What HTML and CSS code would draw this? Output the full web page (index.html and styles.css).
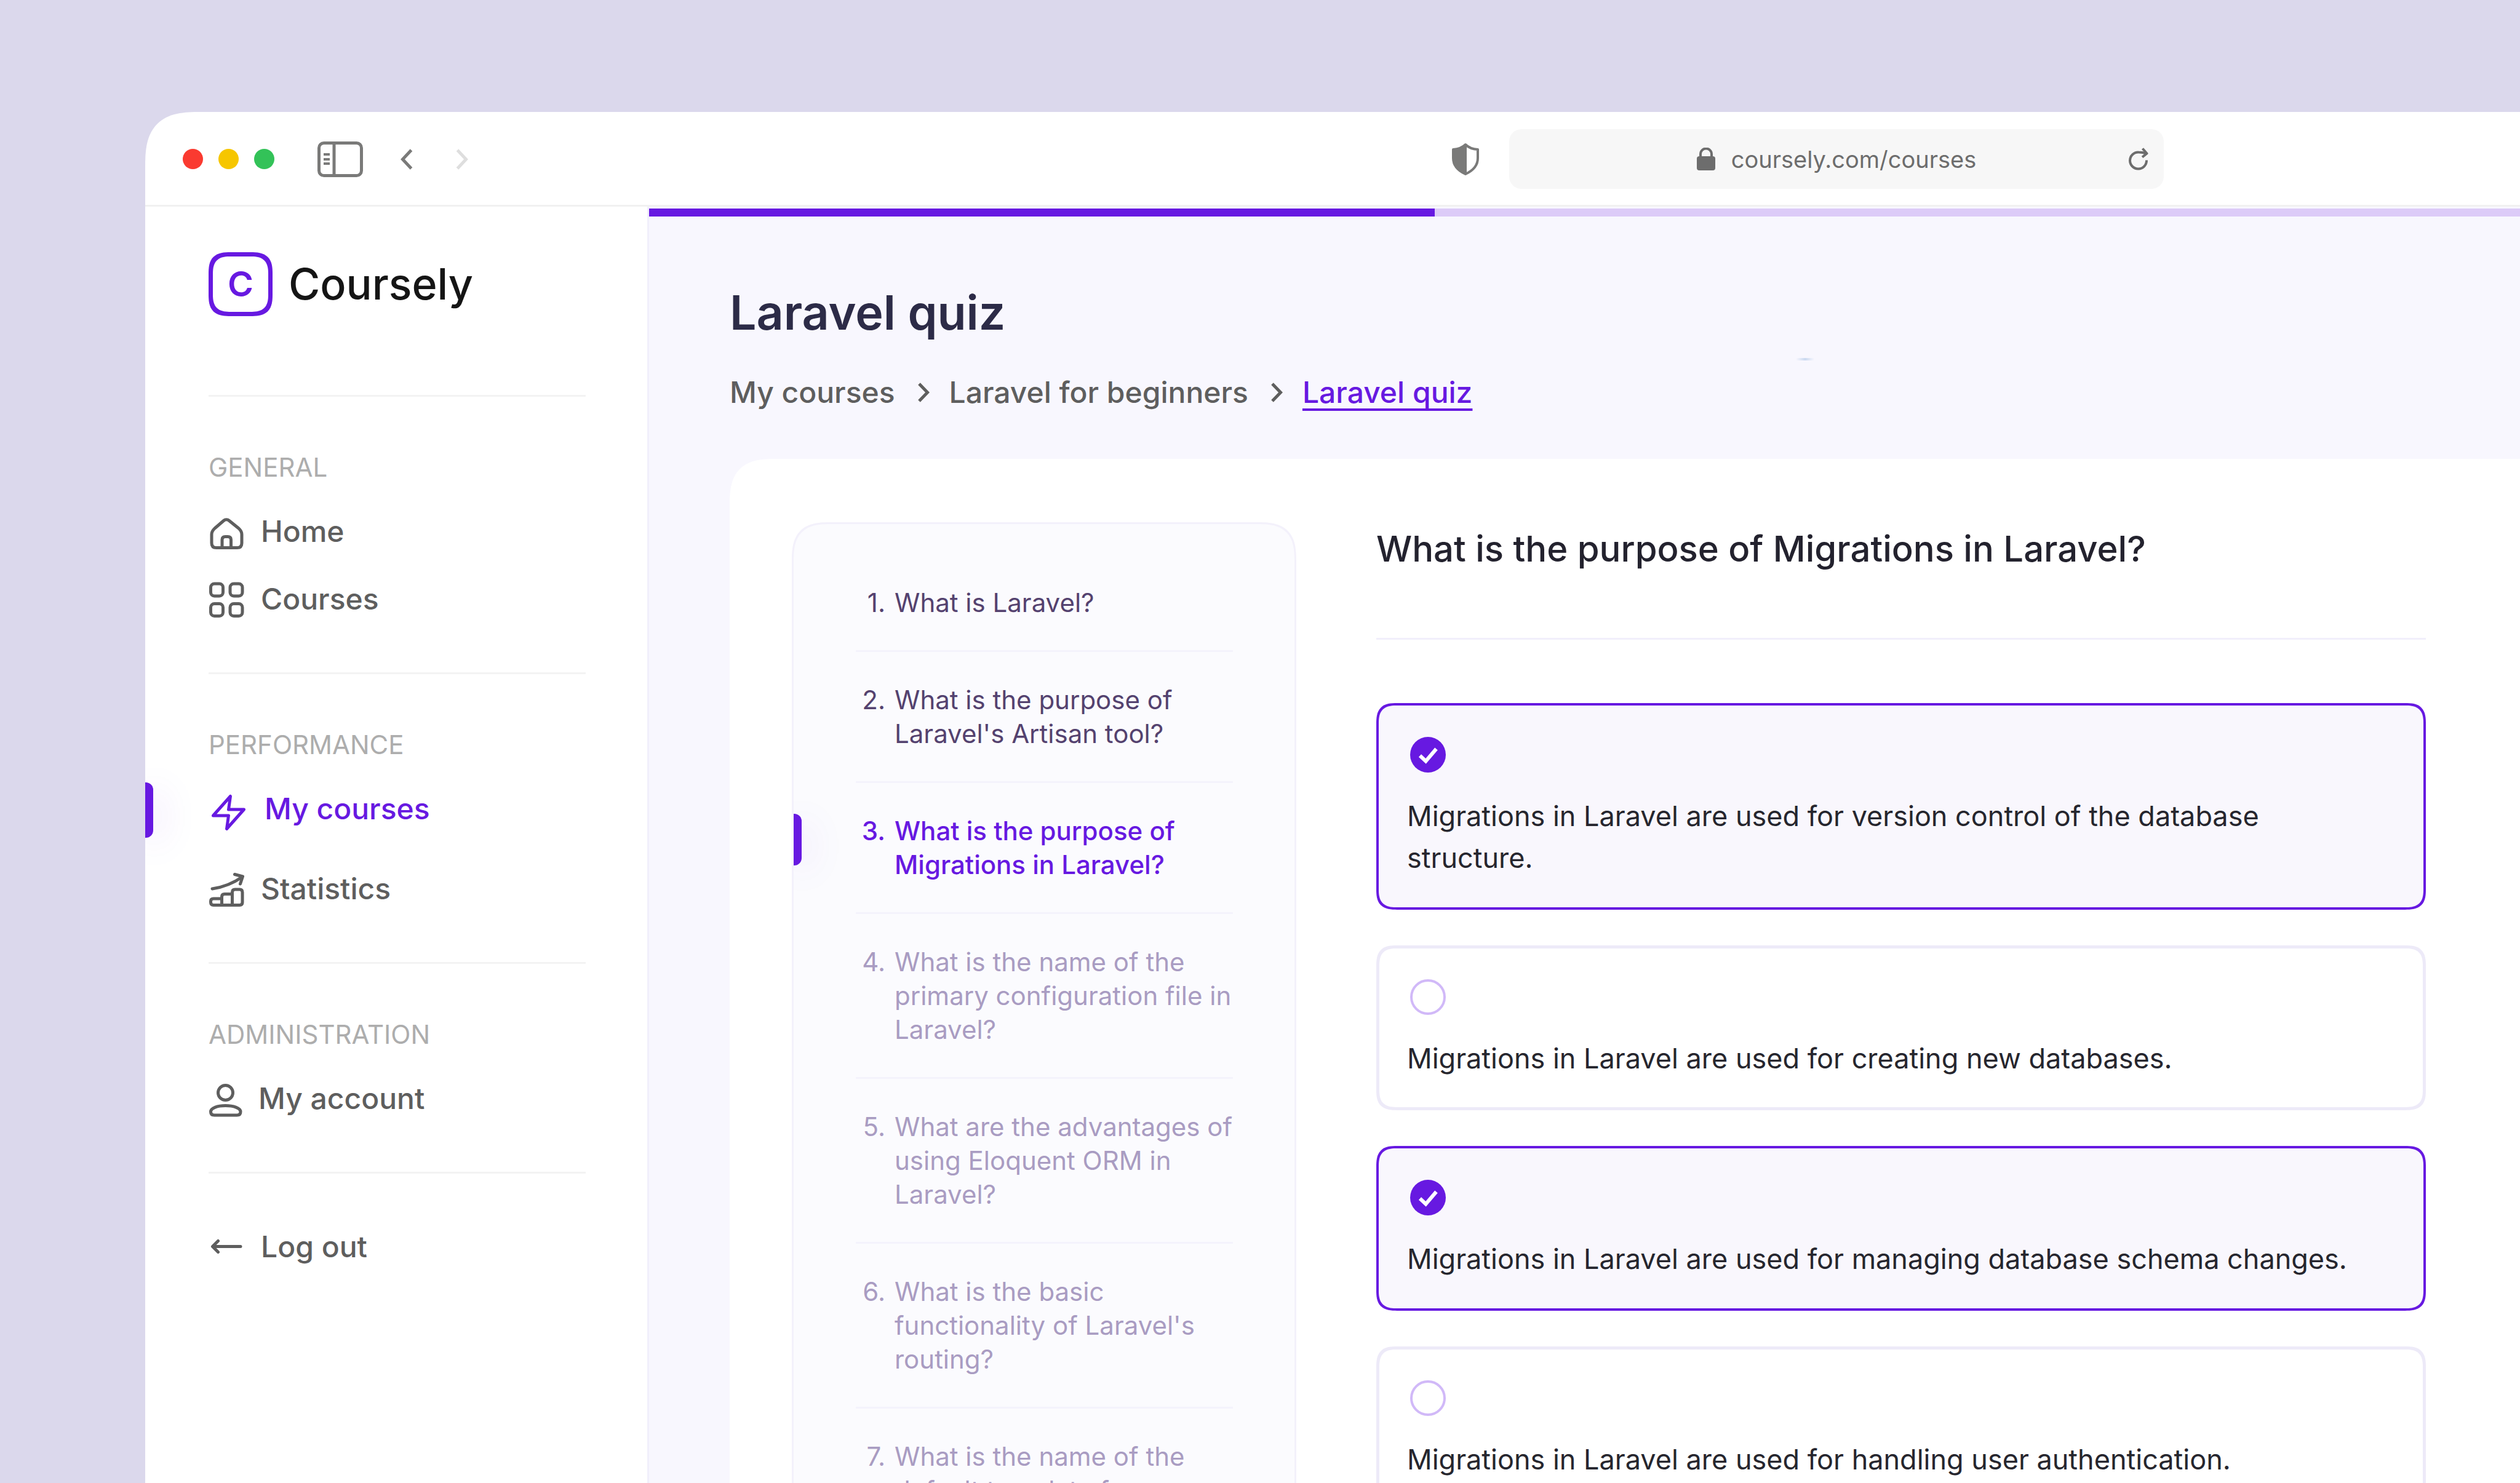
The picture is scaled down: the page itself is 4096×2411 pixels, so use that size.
FILE: index.html
```html
<!DOCTYPE html>
<html lang="en">
<head>
<meta charset="utf-8">
<meta name="viewport" content="width=device-width, initial-scale=1">
<title>Laravel quiz – Coursely</title>
<link rel="stylesheet" href="styles.css">
</head>
<body>
<div class="window">
  <header class="toolbar">
    <div class="lights">
      <span class="light light-red"></span>
      <span class="light light-yellow"></span>
      <span class="light light-green"></span>
    </div>
    <button class="tool tool-panel" type="button" aria-label="Toggle sidebar">
      <svg width="74" height="58" viewBox="0 0 74 58" fill="none" stroke="currentColor" stroke-width="5">
        <rect x="2.5" y="2.5" width="69" height="53" rx="8"/>
        <path d="M27 3v52"/>
        <path d="M10 21h10M10 29h10M10 36h10" stroke-width="4"/>
      </svg>
    </button>
    <button class="tool tool-back" type="button" aria-label="Back">
      <svg width="20" height="34" viewBox="0 0 20 34" fill="none" stroke="currentColor" stroke-width="5"><path d="M17.500 2 3.500 17l14 15"/></svg>
    </button>
    <button class="tool tool-forward" type="button" aria-label="Forward" disabled>
      <svg width="20" height="34" viewBox="0 0 20 34" fill="none" stroke="currentColor" stroke-width="5"><path d="M2.500 2l14 15-14 15"/></svg>
    </button>
    <button class="tool tool-shield" type="button" aria-label="Privacy report">
      <svg width="44" height="53" viewBox="0 0 44 53" fill="none" stroke="currentColor" stroke-width="4" stroke-linejoin="round">
        <path d="M22 3C17 8 10 10.500 2 11v14c0 12 8 20.500 20 26 12-5.500 20-14 20-26V11C34 10.500 27 8 22 3z"/>
        <path d="M24 3h-2C17 8 10 10.500 2 11v14c0 12 8 20.500 20 26h2z" fill="currentColor" stroke="none"/>
      </svg>
    </button>
    <div class="address">
      <svg width="30" height="37" viewBox="0 0 30 37" fill="none">
        <rect y="14" width="30" height="23" rx="4" fill="currentColor"/>
        <path d="M6 16v-5.500a9 9 0 0 1 18 0V16" stroke="currentColor" stroke-width="4"/>
      </svg>
      <span>coursely.com/courses</span>
      <button class="tool reload" type="button" aria-label="Reload">
        <svg width="33" height="37" viewBox="0 0 33 37" fill="none" stroke="currentColor" stroke-width="4">
          <path d="M29 20.500A13.500 13.500 0 1 1 16 7.500c4 0 8 .5 12 2"/>
          <path d="M22.500 1.500 29.500 9.500 22 15.500" stroke-linejoin="round"/>
        </svg>
      </button>
    </div>
  </header>

  <div class="app">
    <aside class="sidebar">
      <a class="brand" href="#">
        <span class="brand-mark">C</span>
        <span>Coursely</span>
      </a>
      <nav>
        <section class="group">
          <h2>General</h2>
          <ul>
            <li><a href="#">
              <svg width="58" height="62" viewBox="0 0 58 62"><path d="M10 26 24.500 13.500a7 7 0 0 1 9 0L49 26q5 4.500 5 10v14q0 7.500-7.500 7.500h-34Q5 57.500 5 50V36q0-5.500 5-10z"/><path d="M22 57.500V44.500q0-5 5-5h4.500q5 0 5 5v13"/></svg>
              Home</a></li>
            <li><a href="#">
              <svg width="58" height="62" viewBox="0 0 58 62"><rect x="3.500" y="6" width="20" height="20" rx="6"/><rect x="35" y="6" width="20" height="20" rx="6"/><rect x="3.500" y="38.500" width="20" height="20" rx="6"/><rect x="35" y="38.500" width="20" height="20" rx="6"/></svg>
              Courses</a></li>
          </ul>
        </section>
        <section class="group group-loose">
          <h2>Performance</h2>
          <ul>
            <li><a class="current" href="#" aria-current="page">
              <svg width="64" height="62" viewBox="0 0 64 62"><path d="M35.500 10.500 32.500 32h25L29.500 63.500l3-21.500h-25z"/></svg>
              My courses</a></li>
            <li><a href="#">
              <svg width="58" height="62" viewBox="0 0 58 62"><path d="M21.500 57.500H8q-4.500 0-4.500-4.500v-2q0-4 4.500-4h13.500M21.500 57.500V44q0-4.500 4.500-4.500h12.500M38.500 57.500v-21q0-4.500 4.500-4.500h7.500q4.500 0 4.500 4.500V53q0 4.500-4.500 4.500h-29"/><path d="M6 31Q33 27 55 11.500M42.500 7.500l13 3.500-4 12"/></svg>
              Statistics</a></li>
          </ul>
        </section>
        <section class="group">
          <h2>Administration</h2>
          <ul>
            <li><a href="#">
              <svg width="54" height="62" viewBox="0 0 54 62"><circle cx="27.500" cy="21.500" r="12"/><path d="M3.500 52.500C3.500 46 15 42.500 27.500 42.500S52 46 52 52.500Q52 58 46 58H9.500q-6 0-6-5.500z"/></svg>
              My account</a></li>
          </ul>
        </section>
        <section class="group">
          <ul>
            <li><a href="#">
              <svg width="58" height="62" viewBox="0 0 58 62"><path d="M7 30.500h45M15.500 21.500l-9 9 9 9"/></svg>
              Log out</a></li>
          </ul>
        </section>
      </nav>
    </aside>

    <main class="main">
      <div class="progress" role="progressbar" aria-label="Quiz progress" aria-valuenow="42" aria-valuemin="0" aria-valuemax="100"><div class="progress-fill" style="width: 42%"></div></div>
      <div class="content">
        <span class="smudge"></span>
        <h1>Laravel quiz</h1>
        <nav class="crumbs" aria-label="Breadcrumb">
          <a href="#">My courses</a>
          <svg width="30" height="36" viewBox="0 0 30 36"><path d="M10 4l13.500 14L10 32"/></svg>
          <a href="#">Laravel for beginners</a>
          <svg width="30" height="36" viewBox="0 0 30 36"><path d="M10 4l13.500 14L10 32"/></svg>
          <a class="here" href="#" aria-current="page">Laravel quiz</a>
        </nav>
        <div class="card">
          <ol class="questions">
            <li class="done"><span class="num">1.</span><span>What is Laravel?</span></li>
            <li class="done"><span class="num">2.</span><span>What is the purpose of Laravel's Artisan tool?</span></li>
            <li class="active"><span class="num">3.</span><span>What is the purpose of Migrations in Laravel?</span></li>
            <li><span class="num">4.</span><span>What is the name of the primary configuration file in Laravel?</span></li>
            <li><span class="num">5.</span><span>What are the advantages of using Eloquent ORM in Laravel?</span></li>
            <li><span class="num">6.</span><span>What is the basic functionality of Laravel's routing?</span></li>
            <li><span class="num">7.</span><span>What is the name of the default template for Laravel?</span></li>
          </ol>
          <form class="question">
            <h2>What is the purpose of Migrations in Laravel?</h2>
            <div class="options">
              <label class="option"><input type="checkbox" checked><span>Migrations in Laravel are used for version control of the database structure.</span></label>
              <label class="option"><input type="checkbox"><span>Migrations in Laravel are used for creating new databases.</span></label>
              <label class="option"><input type="checkbox" checked><span>Migrations in Laravel are used for managing database schema changes.</span></label>
              <label class="option"><input type="checkbox"><span>Migrations in Laravel are used for handling user authentication.</span></label>
            </div>
          </form>
        </div>
      </div>
    </main>
  </div>
</div>
</body>
</html>
```
FILE: styles.css
```css
:root {
  --purple: #6719e1;
  --grey: #5e5e5e;
  --line: #f3f3f3;
  --lilac-line: #f3f1fb;
}

* { box-sizing: border-box; margin: 0; padding: 0; }

body {
  display: flex;
  height: 100vh;
  padding: 182px 0 0 236px;
  overflow: hidden;
  background: #dbd8ec;
  font-family: Inter, "Liberation Sans", sans-serif;
}

a { color: inherit; text-decoration: none; }
ul, ol { list-style: none; }
button { border: 0; background: none; font: inherit; color: inherit; }
svg { display: block; flex: none; }

.window {
  flex: 1;
  display: flex;
  flex-direction: column;
  overflow: hidden;
  background: #fff;
  border-top-left-radius: 90px;
  corner-shape: superellipse(1.5);
}

/* Browser toolbar */
.toolbar {
  flex: none;
  display: flex;
  align-items: center;
  height: 154px;
  padding: 2px 579px 0 61px;
  border-bottom: 3px solid #f1f1f1;
  color: #7a7a79;
}
.lights { display: flex; gap: 25px; }
.light { width: 33px; height: 33px; border-radius: 50%; }
.light-red { background: #fa3a30; }
.light-yellow { background: #f6c600; }
.light-green { background: #33c258; }
.tool-panel { margin-left: 70px; }
.tool-back { margin-left: 61px; }
.tool-forward { margin-left: 70px; color: #dedede; }
.tool-shield { margin-left: auto; }
.address {
  position: relative;
  display: flex;
  align-items: center;
  justify-content: center;
  gap: 26px;
  width: 1064px;
  height: 97px;
  margin-left: 49px;
  border-radius: 20px;
  background: #f7f7f7;
  color: #6d6d6d;
  font-size: 38px;
  line-height: 48px;
}
.reload { position: absolute; right: 24px; }

/* Sidebar */
.app { flex: 1; display: flex; }
.sidebar {
  flex: none;
  width: 819px;
  padding: 74px 100px 0 103px;
  border-right: 3px solid #f1effb;
}
.brand {
  display: flex;
  align-items: center;
  gap: 26px;
  margin-bottom: 128px;
  color: #151515;
  font-size: 70px;
  font-weight: 500;
  line-height: 84px;
}
.brand-mark {
  display: grid;
  place-items: center;
  width: 104px;
  height: 104px;
  border: 7px solid var(--purple);
  border-radius: 36px;
  corner-shape: superellipse(1.5);
  color: var(--purple);
  font-size: 57px;
  font-weight: 600;
}
.group {
  padding: 88px 0;
  border-top: 3px solid var(--line);
}
.group h2 {
  margin-bottom: 46px;
  color: #adadad;
  font-size: 42px;
  font-weight: 400;
  line-height: 54px;
  text-transform: uppercase;
}
.group ul { display: flex; flex-direction: column; gap: 48px; }
.group-loose ul { gap: 68px; }
.group a {
  position: relative;
  display: flex;
  gap: 27px;
  color: var(--grey);
  font-size: 48px;
  font-weight: 500;
  line-height: 62px;
}
.group svg {
  overflow: visible;
  fill: none;
  stroke: currentColor;
  stroke-width: 5;
  stroke-linecap: round;
  stroke-linejoin: round;
}
.group .current { color: var(--purple); }
.current::before {
  content: "";
  position: absolute;
  top: -12px;
  left: -103px;
  width: 13px;
  height: 90px;
  border-radius: 0 12px 12px 0;
  background: var(--purple);
  box-shadow: 8px 10px 60px rgba(103, 25, 225, 0.2);
}

/* Page */
.main {
  flex: 1;
  padding-top: 3px;
  background: #f8f7fe;
}
.progress { height: 13px; background: #dccbf8; }
.progress-fill { height: 100%; background: var(--purple); }
.content {
  position: relative;
  padding: 109px 0 0 131px;
}
.smudge {
  position: absolute;
  top: 230px;
  left: 1864px;
  width: 30px;
  height: 4px;
  background: linear-gradient(90deg, transparent, #cbd9f0, transparent);
}
h1 {
  margin-bottom: 53px;
  color: #2c2b47;
  font-size: 77px;
  font-weight: 600;
  line-height: 94px;
}
.crumbs {
  display: flex;
  align-items: center;
  gap: 29px;
  margin-bottom: 78px;
  color: var(--grey);
  font-size: 48px;
  font-weight: 500;
  line-height: 60px;
}
.crumbs svg { fill: none; stroke: currentColor; stroke-width: 5; }
.crumbs .here {
  color: var(--purple);
  text-decoration: underline 4px;
  text-decoration-skip-ink: none;
  text-underline-offset: 9px;
}
.card {
  display: flex;
  align-items: flex-start;
  gap: 130px;
  padding: 103px 153px 103px 101px;
  border-top-left-radius: 76px;
  corner-shape: superellipse(1.5);
  background: #fff;
}

/* Question list */
.questions {
  flex: none;
  width: 820px;
  padding: 50px 100px 50px 101px;
  border: 3px solid var(--lilac-line);
  border-radius: 64px;
  corner-shape: superellipse(1.5);
  background: #fbfbfe;
}
.questions li {
  position: relative;
  display: flex;
  gap: 15px;
  padding: 50px 0;
  color: #a99cc2;
  font-size: 42px;
  line-height: 55px;
}
.questions li + li { border-top: 3px solid #f4f3fc; }
.num { flex: none; width: 48px; text-align: right; }
.questions .done { color: #54426f; }
.questions .active { color: var(--purple); font-weight: 500; }
.active::before {
  content: "";
  position: absolute;
  top: 50px;
  left: -101px;
  width: 13px;
  height: 84px;
  border-radius: 0 12px 12px 0;
  background: var(--purple);
  box-shadow: 8px 10px 60px rgba(103, 25, 225, 0.15);
  clip-path: inset(-80px -80px -80px 0);
}

/* Answers */
.question { flex: 1; padding-top: 7px; }
.question h2 {
  padding-bottom: 109px;
  border-bottom: 3px solid #f1effb;
  color: #23222e;
  font-size: 58px;
  font-weight: 500;
  line-height: 72px;
}
.options {
  display: flex;
  flex-direction: column;
  gap: 58px;
  padding-top: 103px;
}
.option {
  display: flex;
  flex-direction: column;
  gap: 37px;
  padding: 50px 76px 45px 45px;
  border: 5px solid #edeaf8;
  border-radius: 34px;
  corner-shape: superellipse(1.5);
  color: #26262e;
  font-size: 45px;
  line-height: 68px;
}
.option:has(:checked) {
  padding: 51px 77px 46px 46px;
  border: 4px solid var(--purple);
  background: #f9f7fd;
}
.option input {
  appearance: none;
  width: 58px;
  height: 58px;
  margin-left: 5px;
  border: 4px solid #d1b9f8;
  border-radius: 50%;
}
.option input:checked {
  border: 0;
  background: var(--purple) url("data:image/svg+xml,%3Csvg xmlns='http://www.w3.org/2000/svg' viewBox='0 0 58 58' fill='none' stroke='white' stroke-width='6'%3E%3Cpath d='M16 30.500 25.500 39.500 42.500 19.500'/%3E%3C/svg%3E") center / 58px 58px no-repeat;
}
```
